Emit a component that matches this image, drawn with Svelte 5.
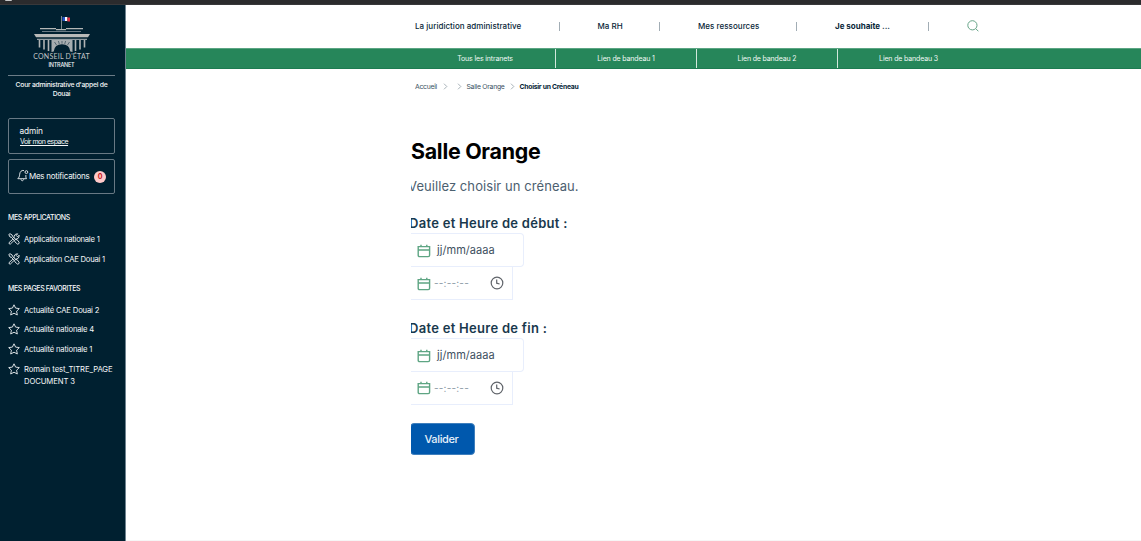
<script>
  const links = ['Tous les intranets', 'Lien de bandeau 1', 'Lien de bandeau 2', 'Lien de bandeau 3'];
  const applications = ['Application nationale 1', 'Application CAE Douai 1'];
  const favorites = ['Actualité CAE Douai 2', 'Actualité nationale 4', 'Actualité nationale 1', 'Romain test_TITRE_PAGE DOCUMENT 3'];
  const groups = [
    { key: 'start', label: 'Date et Heure de début :' },
    { key: 'end', label: 'Date et Heure de fin :' }
  ];
</script>

{#snippet calendar()}
  <svg class="cal" viewBox="0 0 14 15" width="14" height="15">
    <path d="M1.2 3.6H12.6V12.2Q12.6 13.6 11.2 13.6H2.6Q1.2 13.6 1.2 12.2ZM1.2 7H12.6M4 1.8V4.2M9.8 1.8V4.2" />
  </svg>
{/snippet}

{#snippet chevron()}
  <svg class="chev" viewBox="0 0 5 7" width="5" height="7"><path d="M1 .7L3.8 3.5L1 6.3" /></svg>
{/snippet}

<div class="page">
  <div class="topbar"><span></span></div>
  <div class="body">
    <aside>
      <div class="logo">
        <svg viewBox="0 0 60 39" width="60" height="39">
          <path d="M29.5 0V13" stroke="#8b949a" stroke-width=".9" />
          <path d="M30.5 1H33V5H30.5Z" fill="#2455c8" />
          <path d="M33 1H35.4V5H33Z" fill="#fff" />
          <path d="M35.4 1.5H38V5.5H35.4Z" fill="#e53045" />
          <path d="M8 12.7H24M34 12.7H51M24 13.7H34" stroke="#b5b7b6" stroke-width="1.3" />
          <path d="M10 15.5H49" stroke="#85929a" stroke-width=".8" />
          <path d="M2 18H58L56 21.3H4Z" fill="#b9bab9" />
          <path d="M5 23.3H55" stroke="#909ba1" stroke-width="1.2" />
          <path d="M7.5 24V31.5M12 24V33.5M16.5 24V35M43.5 24V35M48 24V33.5M52.5 24V31.5" stroke="#b0b3b4" stroke-width="1.6" />
          <path d="M19.5 36V24H40.5V36L38.3 35.4Q37.5 28.2 30 28.2Q22.5 28.2 21.7 35.4Z" fill="#a6acaf" />
          <path d="M24.5 29L22.5 26M27.3 28L26.4 25M30 27.6V25M32.7 28L33.6 25M35.5 29L37.5 26" stroke="#001f30" stroke-width=".5" />
        </svg>
        <div class="brand">CONSEIL D'ÉTAT</div>
        <div class="intranet">INTRANET</div>
      </div>
      <div class="court">Cour administrative d'appel de Douai</div>
      <div class="box user"><span>admin</span><a href="#espace">Voir mon espace</a></div>
      <div class="box notif">
        <svg viewBox="0 0 12 13" width="12" height="13"><path d="M7 1.5C4.2 1 2.9 3 2.7 5.2C2.5 7.5 2 8.6 .8 9.7H9.5C8.8 8.8 8.8 7.4 8.9 6M4 10.2C4.1 12.2 6.4 12.2 6.7 10.2" /><circle cx="9.4" cy="3.1" r="1.4" /></svg>
        <span>Mes notifications</span><b>0</b>
      </div>
      <h2>MES APPLICATIONS</h2>
      <ul class="apps">
        {#each applications as name}
          <li>
            <svg viewBox="0 0 12 12" width="12" height="12"><path d="M.8 1.5L2 .7L4.2 2L4.3 3.2L8 6.8L9 6.6L11.2 9.3Q11.4 11 9.6 11.2L6.8 8.8L6.9 7.8L3.2 4.2L2 4ZM1 9.7L4.9 6.1M2.4 11L6.1 7.4M1 9.7Q.6 11.2 2.4 11M6.1 4.9Q5.5 1 9.7 .8L8.2 2.4L9.5 3.8L11.1 2.2Q11.2 6.2 7.4 6.1" /></svg>
            <span>{name}</span>
          </li>
        {/each}
      </ul>
      <h2 class="fav-title">MES PAGES FAVORITES</h2>
      <ul class="favs">
        {#each favorites as name}
          <li>
            <svg viewBox="0 0 12 12" width="12" height="12"><path d="M6 .8L7.6 4.1L11.3 4.6L8.6 7.2L9.3 11L6 9.2L2.7 11L3.4 7.2L.7 4.6L4.4 4.1Z" /></svg>
            <span>{name}</span>
          </li>
        {/each}
      </ul>
    </aside>

    <div class="main">
      <nav class="menu">
        <a class="m1" href="#juridiction">La juridiction administrative</a><i></i>
        <a class="m2" href="#rh">Ma RH</a><i></i>
        <a class="m3" href="#ressources">Mes ressources</a><i></i>
        <a class="m4" href="#souhaite">Je souhaite ...</a><i></i>
        <svg viewBox="0 0 12 12" width="12" height="12"><circle cx="5.4" cy="5.3" r="4.6" /><path d="M8.8 8.7L11.4 11.3" /></svg>
      </nav>
      <nav class="band">
        {#each links as link}<a href="#lien">{link}</a>{/each}
      </nav>
      <main>
        <div class="crumbs">
          <span class="c1">Accueil</span>{@render chevron()}<span class="c2"></span>{@render chevron()}
          <span class="c3">Salle Orange</span>{@render chevron()}<strong>Choisir un Créneau</strong>
        </div>
        <div class="content">
          <h1>Salle Orange</h1>
          <p>Veuillez choisir un créneau.</p>
          {#each groups as group (group.key)}
            <section>
              <h3>{group.label}</h3>
              <div class="field date">{@render calendar()}<span>jj/mm/aaaa</span></div>
              <div class="field time">
                {@render calendar()}<span>--:--:--</span>
                <svg class="clock" viewBox="0 0 14 14" width="14" height="14"><circle cx="7" cy="7" r="5.8" /><path d="M6.7 3.5V7.2L9.6 8" /></svg>
              </div>
            </section>
          {/each}
          <button>Valider</button>
        </div>
      </main>
    </div>
  </div>
</div>

<style>
  :global(body) { margin: 0; overflow: hidden; }
  .page { height: 541px; display: flex; flex-direction: column; font-family: Inter, sans-serif; background: #fff; color: #082638; }
  .page * { box-sizing: border-box; }
  a { color: inherit; text-decoration: none; }
  svg { flex: none; fill: none; }
  .topbar { height: 5px; background: #2b2b2d; flex: none; overflow: hidden; border-bottom: 1px solid #38383a; }
  .topbar span { display: block; width: 7px; height: 1px; margin-left: 5px; background: #c9c9c9; border-radius: 0 0 3px 3px; }
  .body { flex: 1; display: flex; min-height: 0; }

  aside { width: 126px; flex: none; background: #002030; color: #f5f7f8; padding: 10px 10px 0 8px; border-right: 1px solid #6f8390; }
  .logo { height: 61px; padding-top: 1px; border-bottom: 1px solid #6c7c87; display: flex; flex-direction: column; align-items: center; }
  .brand { font: 7px/8px Lato, sans-serif; letter-spacing: .24px; color: #c3c6c7; margin-top: -3px; white-space: nowrap; }
  .intranet { font-size: 5.5px; line-height: 7px; letter-spacing: -.24px; font-weight: 500; margin-top: 2px; }
  .court { margin-top: 5px; height: 37px; text-align: center; font-size: 6.8px; line-height: 8.6px; font-weight: 500; letter-spacing: -.26px; }
  .box { border: 1px solid #687984; border-radius: 2px; height: 36px; }
  .user { display: flex; flex-direction: column; padding: 7px 0 0 11px; font-size: 8.3px; line-height: 11px; letter-spacing: -.12px; }
  .user a { font-size: 7px; line-height: 10px; letter-spacing: -.5px; text-decoration: underline; }
  .user span { margin-left: -.5px; }
  .notif { height: 35px; margin-top: 5px; display: flex; align-items: center; padding-left: 8px; font-size: 8px; letter-spacing: -.26px; }
  .notif span { width: 65px; white-space: nowrap; margin-top: -1px; }
  .notif svg { margin-top: -2px; }
  .notif svg, li svg { stroke: #eef2f4; stroke-width: .9; stroke-linejoin: round; }
  .notif b { width: 12px; height: 12px; border-radius: 6px; background: #ffc9c9; color: #c9191e; text-align: center; font-size: 7px; line-height: 12px; }
  h2 { margin: 18px 0 0; height: 11px; font-size: 7px; line-height: 11px; letter-spacing: -.37px; font-weight: 500; white-space: nowrap; }
  ul { list-style: none; margin: 0; padding: 0; }
  .apps { padding-top: 11px; height: 60px; }
  .favs { padding-top: 10.5px; }
  h2.fav-title { margin-top: 0; }
  li { display: flex; gap: 4px; height: 19.8px; font-size: 7.7px; line-height: 12px; letter-spacing: -.25px; }
  .favs li { letter-spacing: -.19px; }
  .favs li:last-child { letter-spacing: -.1px; }
  li svg { margin-top: -1px; }
  li span { width: 96px; flex: none; }

  .main { flex: 1; display: flex; flex-direction: column; border-bottom: 1px solid #f6f6f6; }
  .menu { height: 43px; padding-left: 289px; display: flex; align-items: center; font-size: 8px; font-weight: 500; white-space: nowrap; flex: none; }
  .menu a { padding-bottom: 2px; letter-spacing: .03px; }
  .menu i { width: 1px; height: 9px; background: #a2adb5; }
  .m1 { width: 144px; }
  .m2 { width: 99px; padding-left: 37.5px; }
  .m3 { width: 136px; padding-left: 38px; }
  .menu .m4 { width: 131px; padding-left: 38px; font-weight: 700; letter-spacing: 0; }
  .menu svg { margin: 0 0 1px 38px; stroke: #66a487; stroke-width: 1; }
  .band { height: 21px; flex: none; background: #26865a; border-top: 1px solid #5ba583; border-bottom: 1px solid #1d7b51; display: flex; padding-left: 289px; color: #f2faf6; font-size: 7px; letter-spacing: -.15px; }
  .band a { width: 141px; line-height: 19px; text-align: center; border-right: 1px solid #d2e7dc; }
  .band a:last-child { border: 0; }
  main { padding: 12px 0 0 285px; }
  .crumbs { display: flex; align-items: center; height: 12px; padding-left: 4px; font-size: 6.8px; letter-spacing: -.25px; white-space: nowrap; color: #38505e; }
  .crumbs > * { margin-top: -1px; }
  .crumbs strong { margin-left: 5px; color: #082638; letter-spacing: -.26px; }
  .c1 { width: 27.5px; }
  .c2 { width: 9px; }
  .c3 { width: 43px; margin-left: 5px; }
  .chev { stroke: #82919b; stroke-width: .7; }

  .content { overflow: hidden; padding-top: 44px; }
  h1 { margin: 0; font-size: 21.4px; line-height: 28px; font-weight: 650; color: #000; letter-spacing: -.28px; }
  p { margin: 13px 0 0 -3px; font-size: 13px; line-height: 16px; color: #4c6070; letter-spacing: .07px; }
  section { height: 104.5px; padding-top: 20px; }
  section + section { height: 105px; }
  h3 { margin: 0 0 1px -2px; font-size: 13px; line-height: 18px; font-weight: 600; color: #19394d; white-space: nowrap; letter-spacing: .28px; }
  .field { display: flex; align-items: center; border: 1px solid #e8eefc; border-left: 0; }
  .date { width: 113px; height: 34px; border-radius: 0 4px 4px 0; padding-left: 6px; font-size: 11px; color: #405061; }
  .date span { margin: 0 0 0 6px; letter-spacing: .05px; }
  .time { width: 102px; height: 34px; margin-top: -1px; padding-left: 6px; font-size: 10px; color: #8997a2; }
  .time span { margin-left: 3px; width: 45px; white-space: nowrap; letter-spacing: .2px; }
  .date .cal { margin-top: 1px; }
  .cal { stroke: #5ea583; stroke-width: 1.4; }
  .clock { margin: 0 0 0 11px; stroke: #60646a; stroke-width: 1.2; }
  button { display: block; margin: 19px 0 0 -1px; width: 65px; height: 32px; padding: 0 2px 0 0; border: 1px solid #3f7fbd; border-radius: 4px; background: #0058ad; color: #e6f0fa; font: 500 11px Inter, sans-serif; letter-spacing: -.35px; }
</style>
